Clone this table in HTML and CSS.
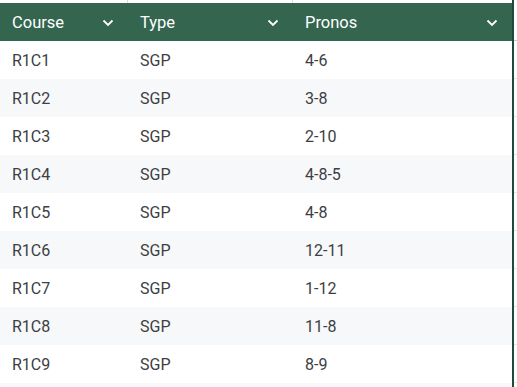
FILE: index.html
```html
<!DOCTYPE html>
<html lang="fr">
<head>
    <meta charset="UTF-8">
    <meta name="viewport" content="width=device-width, initial-scale=1.0">
    <title>Pronos</title>
    <link rel="stylesheet" href="styles.css">
</head>
<body>
    <div class="wrap">
        <div class="grid">
            <div class="top">
                <div class="tcell c1"></div>
                <div class="tcell c2"></div>
                <div class="tcell c3"></div>
            </div>
            <div class="head">
                <div class="hcell c1">Course <svg class="chev" viewBox="0 0 12 8"><path d="M1.5 1.5 L6 6 L10.5 1.5"/></svg></div>
                <div class="hcell c2">Type <svg class="chev" viewBox="0 0 12 8"><path d="M1.5 1.5 L6 6 L10.5 1.5"/></svg></div>
                <div class="hcell c3">Pronos <svg class="chev" viewBox="0 0 12 8"><path d="M1.5 1.5 L6 6 L10.5 1.5"/></svg></div>
            </div>
            <div class="row"><div class="cell c1">R1C1</div><div class="cell c2">SGP</div><div class="cell c3">4-6</div></div>
            <div class="row"><div class="cell c1">R1C2</div><div class="cell c2">SGP</div><div class="cell c3">3-8</div></div>
            <div class="row"><div class="cell c1">R1C3</div><div class="cell c2">SGP</div><div class="cell c3">2-10</div></div>
            <div class="row"><div class="cell c1">R1C4</div><div class="cell c2">SGP</div><div class="cell c3">4-8-5</div></div>
            <div class="row"><div class="cell c1">R1C5</div><div class="cell c2">SGP</div><div class="cell c3">4-8</div></div>
            <div class="row"><div class="cell c1">R1C6</div><div class="cell c2">SGP</div><div class="cell c3">12-11</div></div>
            <div class="row"><div class="cell c1">R1C7</div><div class="cell c2">SGP</div><div class="cell c3">1-12</div></div>
            <div class="row"><div class="cell c1">R1C8</div><div class="cell c2">SGP</div><div class="cell c3">11-8</div></div>
            <div class="row"><div class="cell c1">R1C9</div><div class="cell c2">SGP</div><div class="cell c3">8-9</div></div>
            <div class="row"><div class="cell c1"></div><div class="cell c2"></div><div class="cell c3"></div></div>
        </div>
        <div class="edge"></div>
        <div class="next">
            <div class="ntop"></div>
            <div class="nhead"></div>
            <div class="nrow"></div>
            <div class="nrow"></div>
            <div class="nrow"></div>
            <div class="nrow"></div>
            <div class="nrow"></div>
            <div class="nrow"></div>
            <div class="nrow"></div>
            <div class="nrow"></div>
            <div class="nrow"></div>
        </div>
    </div>
</body>
</html>
```

FILE: styles.css
```css
html, body {
    margin: 0;
    padding: 0;
    background: #fff;
    font-family: Roboto, "Liberation Sans", sans-serif;
}

.wrap {
    display: flex;
    height: 387px;
    overflow: hidden;
}

.grid {
    width: 512px;
}

.c1 { width: 128px; }
.c2 { width: 165px; }
.c3 { width: 219px; }

.top {
    display: flex;
    height: 3px;
}
.tcell {
    box-sizing: border-box;
    border-right: 1px solid #d9dcdf;
}
.tcell.c3 { border-right: none; }

.head {
    display: flex;
    height: 38px;
    background: #33654f;
    color: #fff;
    font-size: 16.5px;
}
.hcell {
    box-sizing: border-box;
    display: flex;
    align-items: center;
    justify-content: space-between;
    padding: 1px 14px 0 12px;
}

.chev {
    width: 12px;
    height: 8px;
    fill: none;
    stroke: #fff;
    stroke-width: 1.8;
}

.row {
    display: flex;
    height: 38px;
    color: #3c4043;
    font-size: 16px;
}
.row:nth-child(even) {
    background: #f7f8fa;
}
.cell {
    box-sizing: border-box;
    display: flex;
    align-items: center;
    padding-left: 12px;
}

.edge {
    width: 2px;
    background: #1f4a39;
}

.next {
    flex: 1;
}
.ntop { height: 3px; }
.nhead {
    height: 37px;
    border-bottom: 1px solid #c9ccd0;
}
.nrow {
    height: 37px;
    border-bottom: 1px solid #e3e5e8;
}
```
